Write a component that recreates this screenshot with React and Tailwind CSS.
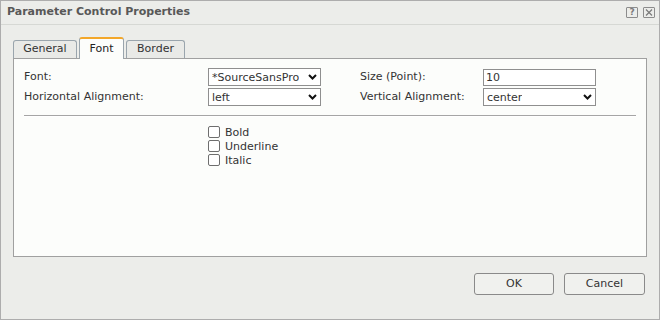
import React from 'react';

function Chevron() {
  return (
    <svg width="9" height="6" viewBox="0 0 9 6" className="shrink-0">
      <path d="M1 1 L4.5 4.5 L8 1" fill="none" stroke="#111" strokeWidth="2" />
    </svg>
  );
}

function Select({ value }) {
  return (
    <div className="w-[113px] h-[18px] border border-[#8f8f8f] bg-white flex items-center justify-between pl-[3px] pr-[3px]">
      <span className="leading-none whitespace-nowrap overflow-hidden">{value}</span>
      <Chevron />
    </div>
  );
}

function Checkbox({ label }) {
  return (
    <div className="h-[14px] flex items-center gap-[5px]">
      <div className="w-[12px] h-[12px] border border-[#6e6e6e] rounded-[2px] bg-white" />
      <span className="leading-none">{label}</span>
    </div>
  );
}

export default function App() {
  return (
    <div className="w-[660px] h-[320px] bg-[#ecedea] border border-[#adadad] flex flex-col text-[11px] text-[#333] font-['DejaVu_Sans',Verdana,sans-serif]">
      {/* Title bar */}
      <div className="h-[24px] shrink-0 border-b border-[#d6d8d4] flex items-center justify-between pl-[6px] pr-[4px]">
        <span className="font-bold text-[#585858]">Parameter Control Properties</span>
        <div className="flex items-center gap-[5px]">
          <div className="w-[12px] h-[11px] border border-[#8c8c8c] rounded-[1px] flex items-center justify-center text-[9px] font-bold text-[#7a7a7a] leading-none">?</div>
          <div className="w-[12px] h-[11px] border border-[#8c8c8c] rounded-[1px] flex items-center justify-center">
            <svg width="8" height="7" viewBox="0 0 8 7">
              <path d="M1 0.5 L7 6.5 M7 0.5 L1 6.5" stroke="#7a7a7a" strokeWidth="1.2" />
            </svg>
          </div>
        </div>
      </div>

      <div className="px-[12px] pt-[12px] flex flex-col">
        {/* Tabs */}
        <div className="h-[21px] flex items-end gap-[2px] relative z-10">
          <div className="w-[64px] h-[18px] border border-b-0 border-[#9aa5ad] rounded-t-[3px] bg-[#e9eae7] flex items-center justify-center">General</div>
          <div className="w-[45px] h-[22px] -mb-px border border-b-0 border-[#9aa5ad] border-t-2 border-t-[#f3a72a] rounded-t-[3px] bg-[#fcfdfb] flex items-center justify-center text-[#222]">Font</div>
          <div className="w-[59px] h-[18px] border border-b-0 border-[#9aa5ad] rounded-t-[3px] bg-[#e9eae7] flex items-center justify-center">Border</div>
        </div>

        {/* Panel */}
        <div className="w-[634px] h-[199px] border border-[#a0a0a0] bg-[#fcfdfb] pt-[9px] px-[10px] flex flex-col">
          <div className="flex items-center h-[18px]">
            <div className="w-[184px]">Font:</div>
            <Select value="*SourceSansPro" />
            <div className="w-[39px]" />
            <div className="w-[123px]">Size (Point):</div>
            <div className="w-[113px] h-[17px] border border-[#8f8f8f] bg-white flex items-center pl-[2px] leading-none">10</div>
          </div>
          <div className="flex items-center h-[18px] mt-[2px]">
            <div className="w-[184px]">Horizontal Alignment:</div>
            <Select value="left" />
            <div className="w-[39px]" />
            <div className="w-[123px]">Vertical Alignment:</div>
            <Select value="center" />
          </div>

          <div className="mt-[9px] border-t border-[#a5a5a5] border-b border-b-white" />

          <div className="mt-[8px] pl-[184px] flex flex-col">
            <Checkbox label="Bold" />
            <Checkbox label="Underline" />
            <Checkbox label="Italic" />
          </div>
        </div>

        {/* Buttons */}
        <div className="mt-[16px] flex justify-end gap-[10px] pr-[2px]">
          <button className="w-[80px] h-[22px] border border-[#8a8a8a] rounded-[3px] bg-[#f0f1ee] text-[#333]">OK</button>
          <button className="w-[81px] h-[22px] border border-[#8a8a8a] rounded-[3px] bg-[#f0f1ee] text-[#333]">Cancel</button>
        </div>
      </div>
    </div>
  );
}
